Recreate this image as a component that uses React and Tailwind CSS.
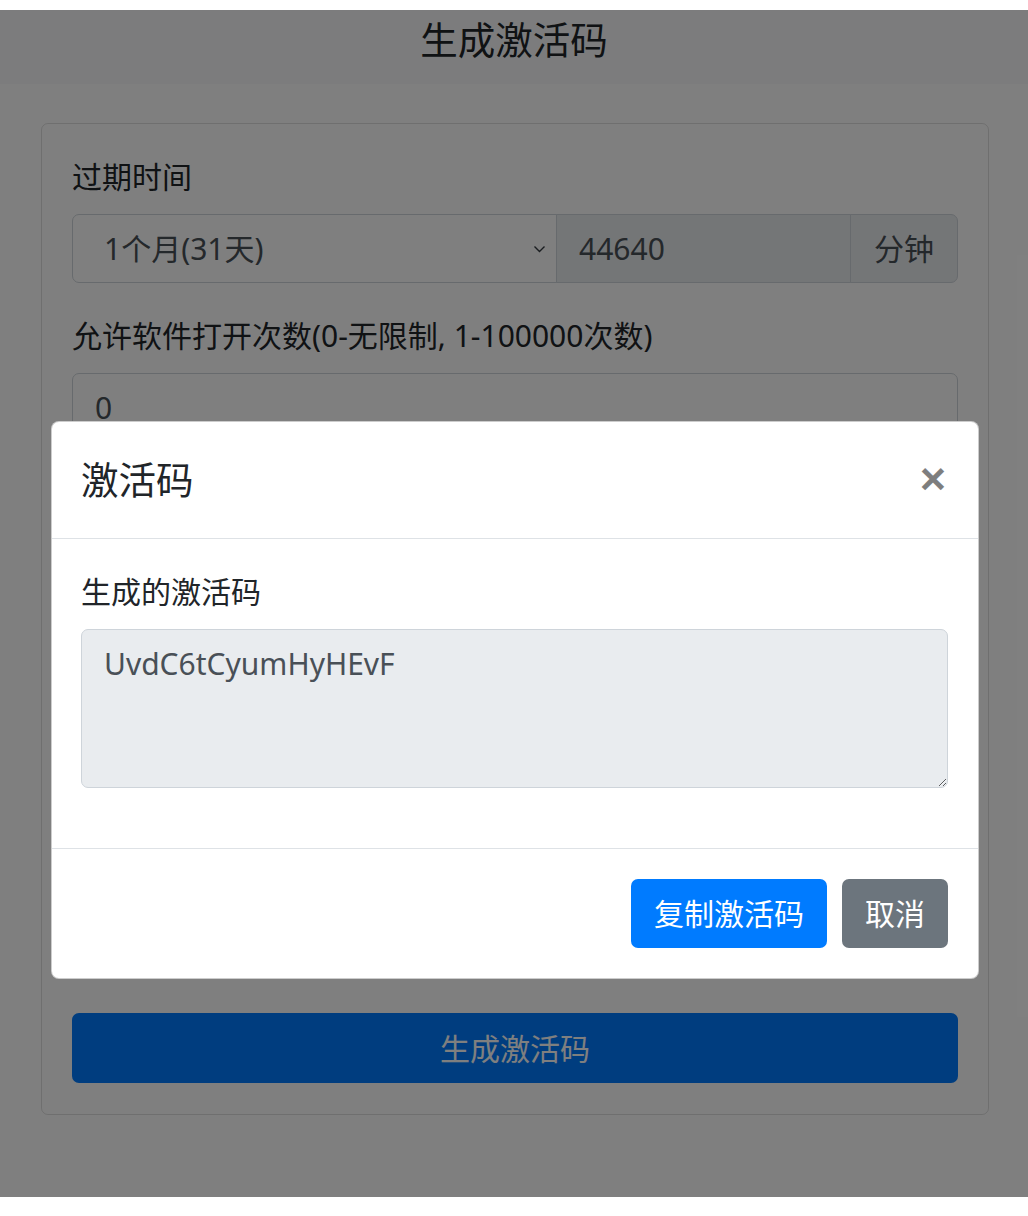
import React from 'react';

const ChevronDown = () => (
    <svg width="13" height="9" viewBox="0 0 13 9" className="absolute right-[11px] top-1/2 -translate-y-1/2">
        <path d="M1.5 2 L6.5 7 L11.5 2" fill="none" stroke="#343a40" strokeWidth="1.4" />
    </svg>
);

const App = () => {
    const code = 'UvdC6tCyumHyHEvF';

    return (
        <div className="min-h-[1216px] bg-white font-[Noto_Sans,Noto_Sans_CJK_SC,sans-serif] text-[#212529]">
            <div className="h-[10px]" />
            <div className="relative h-[1187px] overflow-hidden">
                <div className="h-[74px] bg-[#f8f9fa] pt-[7px] text-center text-[37.5px] leading-[45px]">
                    生成激活码
                </div>

                <div className="ml-[41px] mr-[39px] mt-[39px]">
                    <div className="rounded-[7px] border border-black/[.125] px-[30px] pt-[30px] pb-[31px]">
                        <div className="mb-[30px]">
                            <div className="mb-[15px] text-[30px] leading-[45px]">过期时间</div>
                            <div className="flex h-[69px] text-[30px]">
                                <div className="relative w-[485px]">
                                    <select className="h-full w-full appearance-none rounded-l-[7px] border border-[#ced4da] bg-white pl-[31px] text-[#495057] outline-none">
                                        <option>1个月(31天)</option>
                                    </select>
                                    <ChevronDown />
                                </div>
                                <input
                                    readOnly
                                    value="44640"
                                    className="-ml-px h-full w-[295px] border border-[#ced4da] bg-[#e9ecef] px-[22px] text-[#495057] outline-none"
                                />
                                <div className="-ml-px flex h-full flex-1 items-center justify-center rounded-r-[7px] border border-[#ced4da] bg-[#e9ecef] text-[#495057]">
                                    分钟
                                </div>
                            </div>
                        </div>

                        <div className="mb-[30px]">
                            <div className="mb-[15px] text-[30px] leading-[45px]">允许软件打开次数(0-无限制, 1-100000次数)</div>
                            <input
                                readOnly
                                value="0"
                                className="h-[69px] w-full rounded-[7px] border border-[#ced4da] bg-white px-[22px] text-[30px] text-[#495057] outline-none"
                            />
                        </div>

                        {/* fields hidden behind the modal */}
                        <div className="mb-[30px]">
                            <div className="mb-[15px] text-[30px] leading-[45px]">生成数量</div>
                            <input
                                readOnly
                                value="1"
                                className="h-[69px] w-full rounded-[7px] border border-[#ced4da] bg-white px-[22px] text-[30px] text-[#495057] outline-none"
                            />
                        </div>

                        <div className="mb-[72px]">
                            <div className="mb-[15px] text-[30px] leading-[45px]">备注</div>
                            <textarea
                                readOnly
                                value=""
                                className="block h-[250px] w-full rounded-[7px] border border-[#ced4da] bg-white px-[22px] text-[30px] text-[#495057] outline-none"
                            />
                        </div>

                        <button className="h-[70px] w-full rounded-[7px] bg-[#007bff] text-[30px] text-white">
                            生成激活码
                        </button>
                    </div>
                </div>

                {/* backdrop */}
                <div className="absolute inset-0 bg-black/50" />

                {/* modal */}
                <div className="absolute left-[51px] top-[411px] w-[928px] rounded-[8px] border border-black/20 bg-white">
                    <div className="flex items-center justify-between border-b border-[#dee2e6] py-[30px] pl-[29px] pr-[30px]">
                        <h5 className="text-[37.5px] leading-[56px]">激活码</h5>
                        <button className="mr-[2px] -mt-[4px] text-[45px] font-bold leading-none text-black opacity-50 font-[Liberation_Sans,sans-serif]">
                            ×
                        </button>
                    </div>
                    <div className="py-[30px] pl-[29px] pr-[30px]">
                        <div className="mb-[30px]">
                            <div className="mb-[15px] text-[30px] leading-[45px]">生成的激活码</div>
                            <textarea
                                readOnly
                                value={code}
                                className="block h-[159px] w-full rounded-[7px] border border-[#ced4da] bg-[#e9ecef] px-[22px] pt-[11px] text-[30px] leading-[45px] text-[#495057] outline-none"
                            />
                        </div>
                    </div>
                    <div className="flex justify-end gap-[15px] border-t border-[#dee2e6] px-[30px] py-[30px]">
                        <button className="h-[69px] rounded-[7px] bg-[#007bff] px-[23px] text-[30px] text-white">
                            复制激活码
                        </button>
                        <button className="h-[69px] rounded-[7px] bg-[#6c757d] px-[23px] text-[30px] text-white">
                            取消
                        </button>
                    </div>
                </div>
            </div>
        </div>
    );
};

export default App;
